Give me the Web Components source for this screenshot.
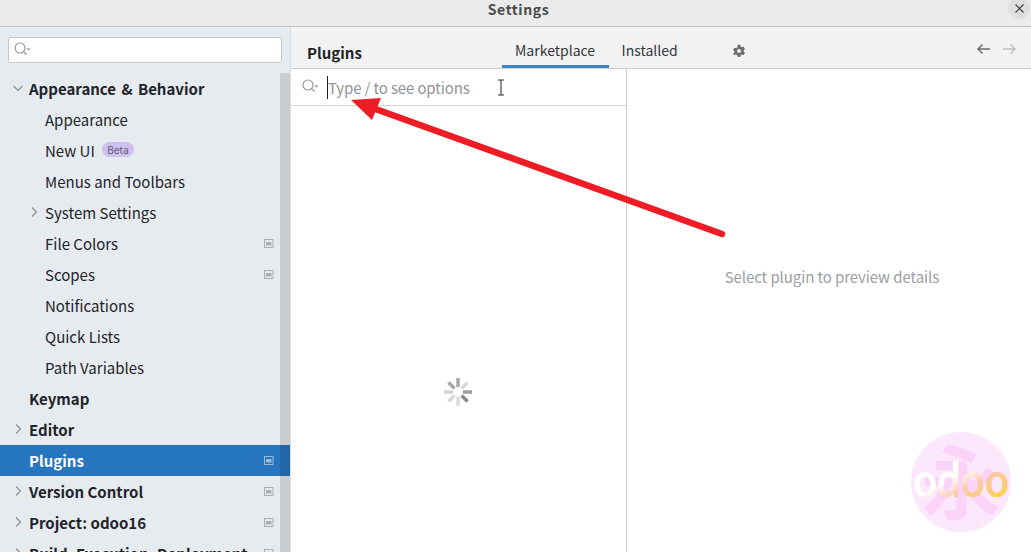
<!DOCTYPE html>
<html>
<head>
<meta charset="utf-8">
<title>Settings</title>
<style>
html, body { margin: 0; height: 552px; overflow: hidden; background: #fff; }
body { font-family: "Noto Sans CJK SC", "Noto Sans", sans-serif; font-size: 15px; }
</style>
</head>
<body>
<settings-window>
  <settings-sidebar slot="side">
    <tree-row level="0" open bold style="word-spacing: 2px">Appearance &amp; Behavior</tree-row>
    <tree-row level="1">Appearance</tree-row>
    <tree-row level="1" beta>New UI</tree-row>
    <tree-row level="1">Menus and Toolbars</tree-row>
    <tree-row level="1" arrow>System Settings</tree-row>
    <tree-row level="1" project>File Colors</tree-row>
    <tree-row level="1" project>Scopes</tree-row>
    <tree-row level="1">Notifications</tree-row>
    <tree-row level="1">Quick Lists</tree-row>
    <tree-row level="1">Path Variables</tree-row>
    <tree-row level="0" bold>Keymap</tree-row>
    <tree-row level="0" bold arrow>Editor</tree-row>
    <tree-row level="0" bold selected project>Plugins</tree-row>
    <tree-row level="0" bold arrow project>Version Control</tree-row>
    <tree-row level="0" bold arrow project>Project: odoo16</tree-row>
    <tree-row level="0" bold arrow project>Build, Execution, Deployment</tree-row>
  </settings-sidebar>
  <plugins-page slot="main"></plugins-page>
</settings-window>
<red-arrow></red-arrow>
<logo-mark></logo-mark>

<script>
const searchIcon = (size) => `
  <svg width="${size}" height="${size}" viewBox="0 0 18 18" fill="none">
    <circle cx="7" cy="7" r="5" stroke="#8f9396" stroke-width="1.1"/>
    <path d="M10.6 10.6 13.500 13.500" stroke="#8f9396" stroke-width="1.3"/>
    <path d="M13.400 7.400h4l-2 2.200z" fill="#8f9396"/>
  </svg>`;

class SettingsWindow extends HTMLElement {
    constructor() {
        super();
        this.attachShadow({ mode: 'open' });
        this.shadowRoot.innerHTML = `
            <style>
                :host {
                    display: flex;
                    flex-direction: column;
                    width: 1031px;
                    height: 552px;
                    overflow: hidden;
                }
                .title {
                    flex: none;
                    height: 26px;
                    padding-left: 6px;
                    box-sizing: content-box;
                    background: #ebebeb;
                    border-bottom: 1px solid #c2c2c2;
                    display: flex;
                    align-items: flex-start;
                    justify-content: center;
                    position: relative;
                    font-size: 14px;
                    line-height: 18px;
                    font-weight: 700;
                    letter-spacing: 0.6px;
                    color: #4a4a4a;
                }
                .close {
                    position: absolute;
                    right: 1px;
                    top: -3px;
                    width: 22px;
                    height: 22px;
                    border-radius: 50%;
                    background: #dedede;
                    display: flex;
                    align-items: center;
                    justify-content: center;
                }
                .body { flex: 1; display: flex; min-height: 0; }
                ::slotted([slot="side"]) { flex: none; width: 291px; }
                ::slotted([slot="main"]) { flex: 1; min-width: 0; }
            </style>
            <div class="title">Settings
                <div class="close">
                    <svg width="11" height="11" viewBox="0 0 11 11"><path d="M1.5 1.5l8 8M9.5 1.5l-8 8" stroke="#3d3d3d" stroke-width="1.2"/></svg>
                </div>
            </div>
            <div class="body">
                <slot name="side"></slot>
                <slot name="main"></slot>
            </div>`;
    }
}

class SettingsSidebar extends HTMLElement {
    constructor() {
        super();
        this.attachShadow({ mode: 'open' });
        this.shadowRoot.innerHTML = `
            <style>
                :host {
                    display: flex;
                    flex-direction: column;
                    background: #e6ebf0;
                    position: relative;
                    overflow: hidden;
                    border-right: 1px solid #dcdcdc;
                    box-sizing: border-box;
                }
                .search {
                    flex: none;
                    height: 24px;
                    margin: 10px 8px 10px 8px;
                    background: #fff;
                    border: 1px solid #c4c6c8;
                    border-radius: 3px;
                    display: flex;
                    align-items: center;
                    padding-left: 4px;
                }
                .bar {
                    position: absolute;
                    right: 0;
                    top: 46px;
                    bottom: 0;
                    width: 10px;
                    background: rgba(0, 0, 0, 0.125);
                }
                .tree { display: flex; flex-direction: column; }
            </style>
            <div class="search">${searchIcon(18)}</div>
            <div class="tree"><slot></slot></div>
            <div class="bar"></div>`;
    }
}

class TreeRow extends HTMLElement {
    constructor() {
        super();
        this.attachShadow({ mode: 'open' });
    }

    connectedCallback() {
        const level = Number(this.getAttribute('level') || 0);
        const open = this.hasAttribute('open');
        const hasArrow = open || this.hasAttribute('arrow');
        const bold = this.hasAttribute('bold');
        const selected = this.hasAttribute('selected');
        const chevron = open
            ? '<path d="M1.5 4 6 8.5 10.5 4" fill="none" stroke="#8c9094" stroke-width="1.2"/>'
            : '<path d="M4 1.5 8.5 6 4 10.5" fill="none" stroke="#8c9094" stroke-width="1.2"/>';

        this.shadowRoot.innerHTML = `
            <style>
                :host {
                    display: flex;
                    align-items: center;
                    flex: none;
                    height: 31px;
                    padding-left: ${29 + level * 16}px;
                    position: relative;
                    color: ${selected ? '#fff' : '#1f2429'};
                    background: ${selected ? '#2675bf' : 'transparent'};
                    font-weight: ${bold ? 700 : 400};
                    font-size: 15px;
                    white-space: nowrap;
                }
                .arrow { position: absolute; left: ${12 + level * 16}px; top: 9px; }
                .beta {
                    margin: -2px 0 0 7px;
                    height: 15px;
                    width: 32px;
                    border-radius: 8px;
                    background: #d0c0f0;
                    color: #5f5a78;
                    font: 10px "Inter", sans-serif;
                    word-spacing: 0;
                    display: flex;
                    align-items: center;
                    justify-content: center;
                }
                .project { position: absolute; left: 264px; top: 11px; }
            </style>
            ${hasArrow ? `<svg class="arrow" width="12" height="12" viewBox="0 0 12 12">${chevron}</svg>` : ''}
            <slot></slot>
            ${this.hasAttribute('beta') ? '<span class="beta">Beta</span>' : ''}
            ${this.hasAttribute('project') ? `<svg class="project" width="10" height="10" viewBox="0 0 10 10"><rect x=".5" y=".5" width="8.5" height="8" fill="none" stroke="${selected ? '#9db9d6' : '#a9aeb2'}"/><rect x="2" y="3" width="5.5" height="3.5" fill="${selected ? '#9db9d6' : '#a9aeb2'}"/></svg>` : ''}`;
    }
}

class PluginsPage extends HTMLElement {
    constructor() {
        super();
        this.attachShadow({ mode: 'open' });
        this.shadowRoot.innerHTML = `
            <style>
                :host {
                    display: flex;
                    flex-direction: column;
                    background: #fff;
                    height: 100%;
                    color: #33383d;
                }
                .head {
                    flex: none;
                    height: 41px;
                    background: #f2f2f2;
                    border-bottom: 1px solid #cfcfcf;
                    display: flex;
                    align-items: flex-end;
                    position: relative;
                }
                h1 {
                    margin: 0 0 4px 16px;
                    width: 195px;
                    font-size: 15px;
                    line-height: 22px;
                    font-weight: 700;
                    color: #1f2429;
                }
                .tab {
                    height: 28px;
                    padding: 0 13.5px 0 13px;
                    box-sizing: border-box;
                    font-size: 14px;
                    line-height: 20px;
                }
                .tab.on { border-bottom: 3px solid #4083c3; }
                .gear { margin: 0 0 10px 40.5px; }
                .nav { position: absolute; right: 14px; top: 16px; display: flex; gap: 13px; }
                .panes { flex: 1; display: flex; min-height: 0; }
                .list { flex: none; width: 335px; border-right: 1px solid #cfcfcf; display: flex; flex-direction: column; }
                .find {
                    flex: none;
                    height: 36px;
                    border-bottom: 1px solid #d4d4d4;
                    display: flex;
                    align-items: center;
                    padding-left: 10px;
                    position: relative;
                }
                .caret { width: 1px; height: 23px; background: #222; margin-left: 8px; }
                .hint { color: #8f9499; font-size: 15px; letter-spacing: -0.14px; }
                .ibeam { position: absolute; left: 206px; top: 10px; }
                .spin { flex: 1; display: flex; justify-content: center; padding: 272px 1px 0 0; }
                .detail {
                    flex: 1;
                    display: flex;
                    justify-content: center;
                    padding: 197px 0 0 6px;
                    color: #9a9fa3;
                    font-size: 15px;
                    letter-spacing: -0.1px;
                }
            </style>
            <div class="head">
                <h1>Plugins</h1>
                <div class="tab on">Marketplace</div>
                <div class="tab">Installed</div>
                <svg class="gear" width="14" height="14" viewBox="0 0 14 14">
                    <path fill="#6e6e6e" fill-rule="evenodd" d="M5.7.8h2.6l.4 1.8 1.2.7 1.8-.6 1.3 2.3-1.4 1.2v1.4l1.4 1.2-1.3 2.3-1.8-.6-1.2.7-.4 1.8H5.7l-.4-1.8-1.2-.7-1.8.6L1 9.8l1.4-1.2V7.2L1 6l1.300-2.300 1.800.6 1.200-.7zM7 5a2 2 0 1 0 0 4 2 2 0 0 0 0-4z"/>
                </svg>
                <div class="nav">
                    <svg width="14" height="12" viewBox="0 0 14 12"><path d="M14 6H2M6.500 1.500 2 6l4.500 4.500" fill="none" stroke="#6e6e6e" stroke-width="1.500"/></svg>
                    <svg width="14" height="12" viewBox="0 0 14 12"><path d="M0 6h12M7.500 1.500 12 6l-4.500 4.500" fill="none" stroke="#c0c0c0" stroke-width="1.500"/></svg>
                </div>
            </div>
            <div class="panes">
                <div class="list">
                    <div class="find">
                        ${searchIcon(18)}
                        <span class="caret"></span><span class="hint">Type / to see options</span>
                        <svg class="ibeam" width="8" height="17" viewBox="0 0 8 17"><path d="M1 1h6M1 16h6M4 1v15" fill="none" stroke="#333" stroke-width="1.100"/></svg>
                    </div>
                    <div class="spin">
                        <svg width="28" height="28" viewBox="0 0 28 28" stroke-width="3.500" fill="none">
                            <path d="M14 0v9" stroke="#a8a8a8"/>
                            <path d="M23.500 4.500 17.500 10.500" stroke="#d8d8d8"/>
                            <path d="M28 14h-9" stroke="#9c9c9c"/>
                            <path d="M23.500 23.500 17.500 17.500" stroke="#8c8c8c"/>
                            <path d="M14 28v-9" stroke="#dcdcdc"/>
                            <path d="M4.500 23.500 10.500 17.500" stroke="#dadada"/>
                            <path d="M0 14h9" stroke="#d4d4d4"/>
                            <path d="M4.500 4.500 10.500 10.500" stroke="#a6a6a6"/>
                        </svg>
                    </div>
                </div>
                <div class="detail">Select plugin to preview details</div>
            </div>`;
    }
}

// annotation drawn over the screenshot
class RedArrow extends HTMLElement {
    constructor() {
        super();
        this.attachShadow({ mode: 'open' });
        this.shadowRoot.innerHTML = `
            <style>
                :host { position: absolute; left: 0; top: 0; width: 1031px; height: 552px; pointer-events: none; }
            </style>
            <svg width="1031" height="552">
                <path d="M722 234 370 107" stroke="#ee1c25" stroke-width="6.500" stroke-linecap="round"/>
                <path d="M351 100 381 98 372 120z" fill="#ee1c25"/>
            </svg>`;
    }
}

class LogoMark extends HTMLElement {
    constructor() {
        super();
        this.attachShadow({ mode: 'open' });
        this.shadowRoot.innerHTML = `
            <style>
                :host { position: absolute; left: 911px; top: 432px; width: 100px; height: 100px; }
                svg { overflow: visible; }
                text { font-family: "Noto Sans CJK SC", sans-serif; }
            </style>
            <svg width="100" height="100" viewBox="0 0 100 100">
                <defs>
                    <linearGradient id="fill" x1="0.05" y1="0.1" x2="0.9" y2="1">
                        <stop offset="0" stop-color="#fff"/>
                        <stop offset=".42" stop-color="#fff"/>
                        <stop offset=".62" stop-color="#fcc9a8"/>
                        <stop offset=".85" stop-color="#fdd060"/>
                        <stop offset="1" stop-color="#ffe600"/>
                    </linearGradient>
                </defs>
                <circle cx="50" cy="50" r="50" fill="#fce8fd"/>
                <text x="50" y="80" text-anchor="middle" font-size="80" font-weight="700" fill="#fbd3f7">永</text>
                <text transform="translate(50 65) scale(1 1.15)" text-anchor="middle" font-size="42" style="font-family: Lato, sans-serif" font-weight="700" fill="url(#fill)">odoo</text>
            </svg>`;
    }
}

customElements.define('settings-window', SettingsWindow);
customElements.define('settings-sidebar', SettingsSidebar);
customElements.define('tree-row', TreeRow);
customElements.define('plugins-page', PluginsPage);
customElements.define('red-arrow', RedArrow);
customElements.define('logo-mark', LogoMark);
</script>
</body>
</html>
